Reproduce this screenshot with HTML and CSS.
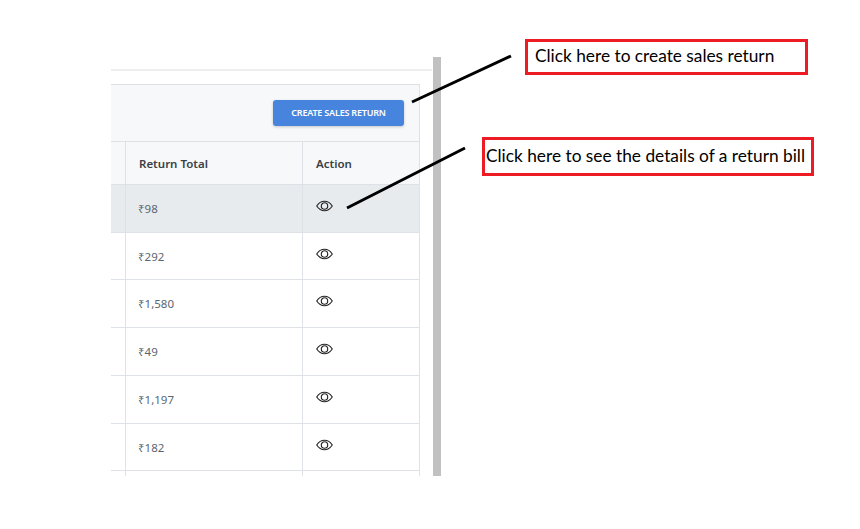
FILE: index.html
```html
<!DOCTYPE html>
<html lang="en">
<head>
<meta charset="utf-8">
<title>Sales return</title>
<link rel="stylesheet" href="styles.css">
</head>
<body>
<svg width="0" height="0" class="defs">
  <symbol id="eye" viewBox="0 0 18 12">
    <path d="M.8 6C2.8 2.9 5.7 1 9 1s6.200 1.900 8.200 5c-2 3.100-4.900 5-8.200 5S2.800 9.100.8 6Z" fill="none" stroke="#222" stroke-width="1.200"/>
    <circle cx="9" cy="6" r="3.400" fill="none" stroke="#222" stroke-width="1.200"/>
  </symbol>
</svg>
<div class="stage">
  <div class="window">
    <div class="content">
      <div class="rule"></div>
      <section class="card">
        <div class="toolbar"><button class="primary">CREATE SALES RETURN</button></div>
        <div class="row head">
          <div class="cell stub"></div>
          <div class="cell total">Return Total</div>
          <div class="cell action">Action</div>
        </div>
        <div class="row hover r48">
          <div class="cell stub"></div>
          <div class="cell total amount">₹98</div>
          <div class="cell action"><svg class="icon"><use href="#eye"/></svg></div>
        </div>
        <div class="row r47">
          <div class="cell stub"></div>
          <div class="cell total amount">₹292</div>
          <div class="cell action"><svg class="icon"><use href="#eye"/></svg></div>
        </div>
        <div class="row r48">
          <div class="cell stub"></div>
          <div class="cell total amount">₹1,580</div>
          <div class="cell action"><svg class="icon"><use href="#eye"/></svg></div>
        </div>
        <div class="row r48">
          <div class="cell stub"></div>
          <div class="cell total amount">₹49</div>
          <div class="cell action"><svg class="icon"><use href="#eye"/></svg></div>
        </div>
        <div class="row r48">
          <div class="cell stub"></div>
          <div class="cell total amount">₹1,197</div>
          <div class="cell action"><svg class="icon"><use href="#eye"/></svg></div>
        </div>
        <div class="row r47">
          <div class="cell stub"></div>
          <div class="cell total amount">₹182</div>
          <div class="cell action"><svg class="icon"><use href="#eye"/></svg></div>
        </div>
        <div class="row tail">
          <div class="cell stub"></div>
          <div class="cell total"></div>
          <div class="cell action"></div>
        </div>
      </section>
    </div>
    <div class="scrollbar"></div>
  </div>
  <svg class="arrows" width="860" height="529" viewBox="0 0 860 529">
    <path d="M412 102 511 56M347 208 465 148" stroke="#000" stroke-width="3" fill="none"/>
  </svg>
  <div class="note note-create">Click here to create sales return</div>
  <div class="note note-detail">Click here to see the details of a return bill</div>
</div>
</body>
</html>
```

FILE: styles.css
```css
* { box-sizing: border-box; }
html, body { margin: 0; background: #fff; }
body { width: 860px; height: 529px; overflow: hidden; font-family: "Noto Sans", "Open Sans", sans-serif; }
.defs { display: block; height: 0; }
.stage { position: relative; width: 860px; height: 529px; padding: 57px 0 0 111px; }
.window { display: flex; width: 330px; height: 419px; overflow: hidden; }
.content { width: 321px; flex: none; padding-top: 12px; }
.rule { height: 2px; background: #eceef0; }
.card { width: 309px; margin-top: 13px; border: solid #dee2e6; border-width: 1px 1px 0 0; }
.toolbar { height: 57px; display: flex; align-items: flex-start; justify-content: flex-end; padding: 15px 15px 0 0; background: #f7f8fa; border-bottom: 1px solid #dee2e6; }
.primary { width: 131px; height: 26px; padding: 0 0 2px; border: 0; border-radius: 3px; background: #4684de; color: #fff; font: 600 9px "Noto Sans", sans-serif; letter-spacing: -.2px; box-shadow: 0 1px 3px rgba(0,0,0,.2); }
.row { display: flex; border-bottom: 1px solid #dee2e6; font-size: 11.500px; color: #5b6670; }
.head { height: 43px; background: #f7f8fa; font-weight: 600; color: #3b4046; }
.hover { background: #e8ebee; }
.r48 { height: 48px; }
.r47 { height: 47px; }
.tail { height: 20px; border-bottom: 0; }
.cell { padding: 16px 13px 0; }
.head .cell { padding-top: 14px; }
.stub { width: 15px; padding: 0; border-right: 1px solid #dee2e6; }
.total { width: 177px; border-right: 1px solid #dee2e6; }
.amount { padding-left: 12px; }
.action { flex: 1; padding-top: 15px; }
.icon { display: block; width: 17px; height: 12px; }
.scrollbar { width: 8px; margin-left: 1px; background: #c1c1c1; }
.arrows { position: absolute; left: 0; top: 0; pointer-events: none; }
.note { position: absolute; display: flex; align-items: center; padding-bottom: 3px; border: 3px solid #ed1c24; background: #fff; color: #000; font: 17.300px "Lato", sans-serif; white-space: nowrap; }
.note-create { left: 525px; top: 39px; width: 283px; height: 36px; padding-left: 7px; }
.note-detail { left: 482px; top: 137px; width: 332px; height: 39px; padding-left: 1px; }
```
